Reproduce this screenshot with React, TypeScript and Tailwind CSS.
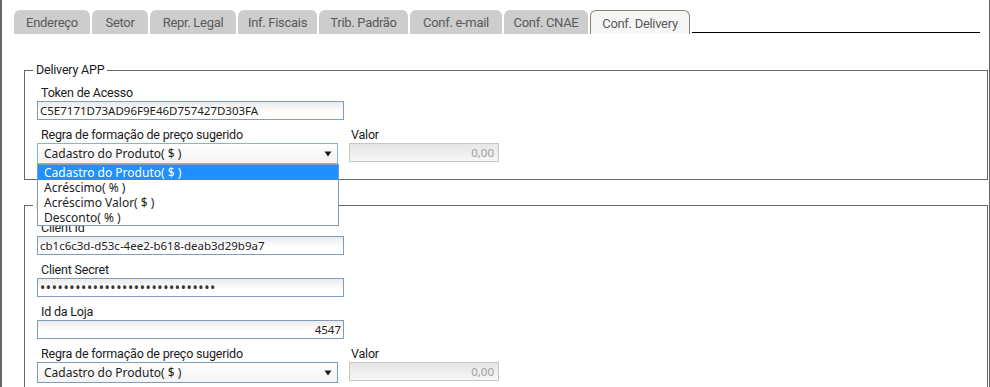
import React from 'react';

const tabs = [
  { label: 'Endereço', w: 'w-[76px]' },
  { label: 'Setor', w: 'w-[56px]' },
  { label: 'Repr. Legal', w: 'w-[86px]' },
  { label: 'Inf. Fiscais', w: 'w-[79px]' },
  { label: 'Trib. Padrão', w: 'w-[89px]' },
  { label: 'Conf. e-mail', w: 'w-[92px]' },
  { label: 'Conf. CNAE', w: 'w-[84px]' },
];

const opcoes = ['Cadastro do Produto( $ )', 'Acréscimo( % )', 'Acréscimo Valor( $ )', 'Desconto( % )'];

const Label = ({ children, className = '' }: { children: React.ReactNode; className?: string }) => (
  <div className={`h-[16px] text-[12.5px] leading-[16px] tracking-[-0.2px] text-[#1a1a1a] font-['Roboto',sans-serif] ${className}`}>
    {children}
  </div>
);

const inputCls =
  "block h-[19px] border border-[#7f9db9] bg-linear-to-b from-[#ebebeb] to-white to-60% px-[2px] text-[#222] font-['Noto_Sans',sans-serif] outline-none";

const Campo = ({ label, value, type = 'text', right = false }: { label: string; value: string; type?: string; right?: boolean }) => (
  <div className="mt-[7px] first:mt-[4px]">
    <Label className="pl-[4px]">{label}</Label>
    <input
      readOnly
      type={type}
      value={value}
      className={`${inputCls} w-[307px] ${right ? 'text-right' : ''} ${
        type === 'password' ? 'text-[14px] tracking-[0.6px] text-[#333]' : 'text-[11.5px]'
      }`}
    />
  </div>
);

const Arrow = () => (
  <svg width="8" height="6" viewBox="0 0 8 6" className="shrink-0">
    <path d="M0.5 0.5h7L4 5.5z" fill="#1a1a1a" />
  </svg>
);

const RegraPreco = ({ open = false }: { open?: boolean }) => (
  <div className="mt-[7px] flex">
    <div>
      <Label className="pl-[4px]">Regra de formação de preço sugerido</Label>
      <div className="relative w-[301px]">
        <div
          className={`flex h-[21px] items-center justify-between border bg-linear-to-b from-white to-[#f3f3f3] pl-[6px] pr-[5px] text-[12px] text-[#222] font-['Noto_Sans',sans-serif] ${
            open ? 'border-[#7eb4ea]' : 'border-[#7f9db9]'
          }`}
        >
          <span>Cadastro do Produto( $ )</span>
          <Arrow />
        </div>
        {open && (
          <ul className="absolute left-0 top-full z-10 w-[302px] border border-[#7f9db9] bg-white text-[12px] font-['Noto_Sans',sans-serif] text-[#222]">
            {opcoes.map((o, i) => (
              <li
                key={o}
                className={`h-[15px] px-[6px] leading-[15px] ${i === 0 ? 'bg-[#1e90ff] text-white' : ''}`}
              >
                {o}
              </li>
            ))}
          </ul>
        )}
      </div>
    </div>
    <div className="ml-[11px]">
      <Label className="pl-[2px]">Valor</Label>
      <input
        readOnly
        disabled
        value="0,00"
        className="block h-[19px] w-[150px] border border-[#c8c8c0] bg-linear-to-b from-[#e6e6e6] to-[#f6f6f6] px-[4px] text-right text-[11.5px] text-[#a0a0a0] font-['Noto_Sans',sans-serif] outline-none"
      />
    </div>
  </div>
);

const Grupo = ({ titulo, className = '', children }: { titulo: string; className?: string; children: React.ReactNode }) => (
  <fieldset className={`ml-[22px] mr-[1px] border border-[#666] px-[12px] pb-[15px] ${className}`}>
    <legend className="-ml-[4px] h-[16px] px-[3px] text-[12.5px] leading-[16px] tracking-[-0.2px] text-[#1a1a1a] font-['Roboto',sans-serif]">
      {titulo}
    </legend>
    {children}
  </fieldset>
);

export default function App() {
  return (
    <div className="h-[387px] w-[990px] overflow-hidden border-l-2 border-r border-[#666] bg-white pt-[10px]">
      <div className="ml-[12px] mr-[9px] flex h-[24px] gap-[2px]">
        {tabs.map((t) => (
          <div
            key={t.label}
            className={`${t.w} flex items-center justify-center rounded-t-[6px] bg-[#cdcdcd] pt-[2px] text-[13px] tracking-[-0.3px] text-[#5a5a5a] font-['Roboto',sans-serif]`}
          >
            {t.label}
          </div>
        ))}
        <div className="flex w-[100px] items-center justify-center rounded-t-[6px] border border-b-0 border-[#8c8070] bg-[#f6f6f6] pt-[2px] text-[13px] tracking-[-0.3px] text-[#5a5a5a] font-['Roboto',sans-serif]">
          Conf. Delivery
        </div>
        <div className="mb-[1px] h-px flex-1 self-end bg-black" />
      </div>

      <Grupo titulo="Delivery APP" className="mt-[28px]">
        <Campo label="Token de Acesso" value="C5E7171D73AD96F9E46D757427D303FA" />
        <RegraPreco open />
      </Grupo>

      <Grupo titulo="iFood" className="mt-[17px]">
        <Campo label="Client Id" value="cb1c6c3d-d53c-4ee2-b618-deab3d29b9a7" />
        <Campo label="Client Secret" type="password" value="abcdefghijabcdefghijabcdefghij" />
        <Campo label="Id da Loja" value="4547" right />
        <RegraPreco />
      </Grupo>
    </div>
  );
}
